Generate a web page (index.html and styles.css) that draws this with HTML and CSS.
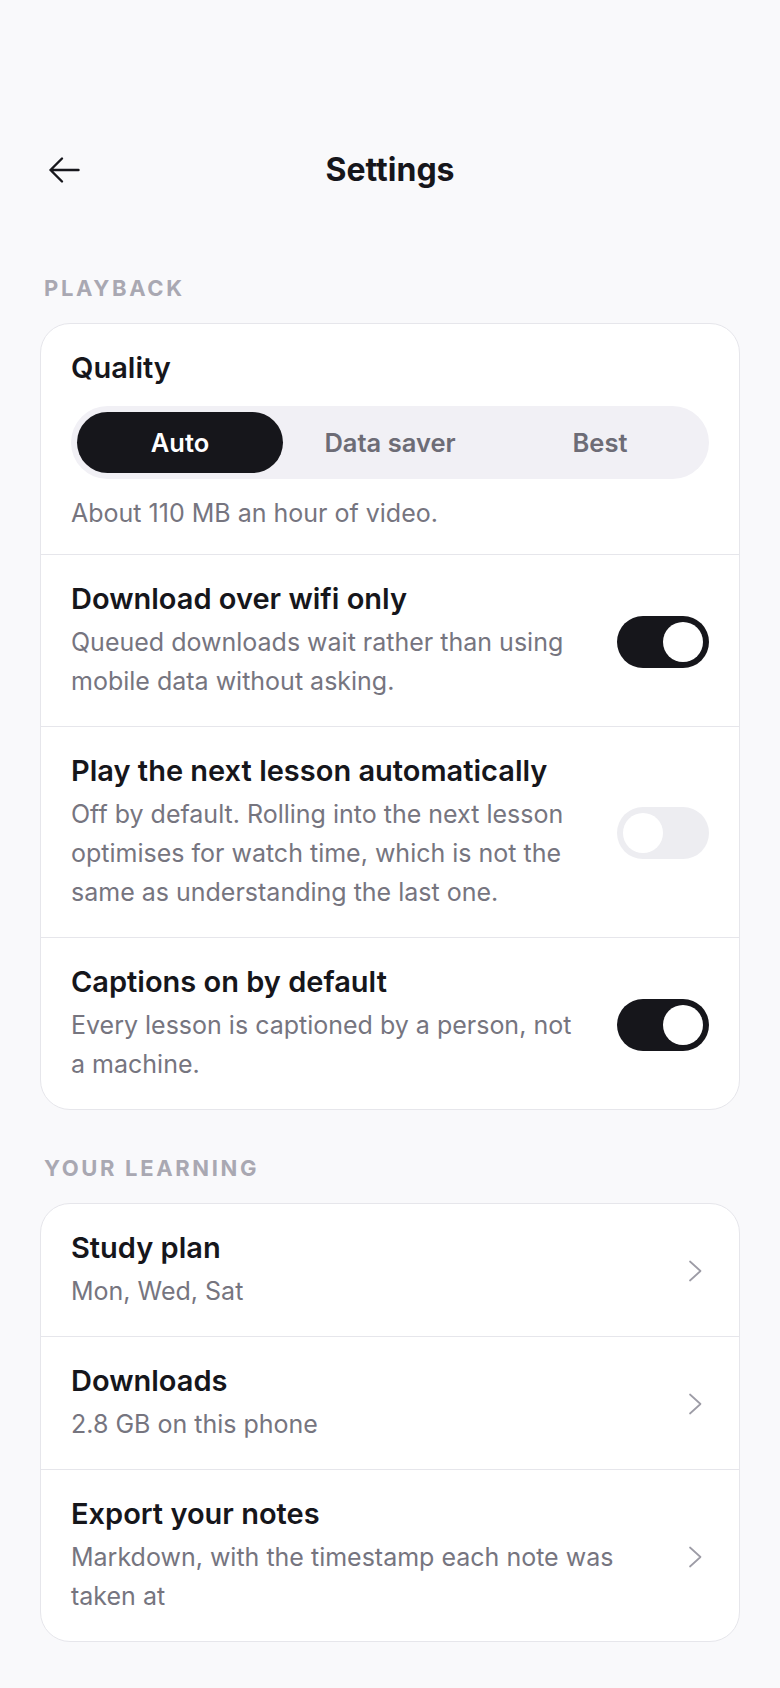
FILE: index.html
```html
<!DOCTYPE html>
<html lang="en">
<head>
<meta charset="utf-8">
<title>Settings</title>
<link rel="stylesheet" href="styles.css">
</head>
<body>
<div class="page">
  <header class="header">
    <button class="back" aria-label="Back">
      <svg width="32" height="28" viewBox="0 0 32 28" fill="none" stroke="#17171c" stroke-width="2.4" stroke-linecap="round" stroke-linejoin="round"><path d="M30.5 14H2.5M14 2.5L2.5 14L14 25.5"/></svg>
    </button>
    <h1 class="title">Settings</h1>
    <span class="spacer"></span>
  </header>

  <h2 class="section-label">PLAYBACK</h2>
  <section class="card">
    <div class="row row-quality">
      <div class="row-title">Quality</div>
      <div class="segmented">
        <span class="seg seg-active">Auto</span>
        <span class="seg">Data saver</span>
        <span class="seg">Best</span>
      </div>
      <div class="row-desc quality-desc">About 110 MB an hour of video.</div>
    </div>
    <div class="row row-toggle">
      <div class="row-text">
        <div class="row-title">Download over wifi only</div>
        <div class="row-desc">Queued downloads wait rather than using mobile data without asking.</div>
      </div>
      <span class="toggle on"><span class="knob"></span></span>
    </div>
    <div class="row row-toggle">
      <div class="row-text">
        <div class="row-title">Play the next lesson automatically</div>
        <div class="row-desc">Off by default. Rolling into the next lesson optimises for watch time, which is not the same as understanding the last one.</div>
      </div>
      <span class="toggle off"><span class="knob"></span></span>
    </div>
    <div class="row row-toggle">
      <div class="row-text">
        <div class="row-title">Captions on by default</div>
        <div class="row-desc">Every lesson is captioned by a person, not a machine.</div>
      </div>
      <span class="toggle on"><span class="knob"></span></span>
    </div>
  </section>

  <h2 class="section-label">YOUR LEARNING</h2>
  <section class="card">
    <div class="row row-nav">
      <div class="row-text">
        <div class="row-title">Study plan</div>
        <div class="row-desc">Mon, Wed, Sat</div>
      </div>
      <svg class="chev" width="14" height="22" viewBox="0 0 14 22" fill="none" stroke="#9d9ca6" stroke-width="1.7" stroke-linecap="round" stroke-linejoin="round"><path d="M2 1.5L12.5 11L2 20.5"/></svg>
    </div>
    <div class="row row-nav">
      <div class="row-text">
        <div class="row-title">Downloads</div>
        <div class="row-desc">2.8 GB on this phone</div>
      </div>
      <svg class="chev" width="14" height="22" viewBox="0 0 14 22" fill="none" stroke="#9d9ca6" stroke-width="1.7" stroke-linecap="round" stroke-linejoin="round"><path d="M2 1.5L12.5 11L2 20.5"/></svg>
    </div>
    <div class="row row-nav">
      <div class="row-text">
        <div class="row-title">Export your notes</div>
        <div class="row-desc">Markdown, with the timestamp each note was taken at</div>
      </div>
      <svg class="chev" width="14" height="22" viewBox="0 0 14 22" fill="none" stroke="#9d9ca6" stroke-width="1.7" stroke-linecap="round" stroke-linejoin="round"><path d="M2 1.5L12.5 11L2 20.5"/></svg>
    </div>
  </section>
</div>
</body>
</html>
```

FILE: styles.css
```css
* { box-sizing: border-box; }

html, body {
  margin: 0;
  padding: 0;
  background: #f9f9fb;
}

body {
  font-family: Inter, "Noto Sans", "Liberation Sans", sans-serif;
  color: #16161b;
  -webkit-font-smoothing: antialiased;
}

.page {
  padding: 140px 40px 40px 40px;
}

.header {
  height: 60px;
  display: flex;
  align-items: center;
  justify-content: space-between;
}

.back {
  width: 40px;
  height: 40px;
  padding: 0;
  margin-left: 8px;
  border: 0;
  background: none;
  display: flex;
  align-items: center;
}

.spacer {
  width: 48px;
}

.title {
  margin: 0;
  font-size: 32px;
  font-weight: 700;
  line-height: 40px;
}

.section-label {
  margin: 74px 0 21px 4px;
  font-size: 22px;
  line-height: 28px;
  font-weight: 700;
  letter-spacing: 0.12em;
  color: #a9a8b2;
}

.card + .section-label {
  margin-top: 44px;
}

.card {
  background: #ffffff;
  border: 1.5px solid #e6e6eb;
  border-radius: 30px;
  overflow: hidden;
}

.row {
  padding: 27px 30px 25px 30px;
}

.row + .row {
  border-top: 1.5px solid #e6e6eb;
}

.row-title {
  font-size: 29px;
  line-height: 34px;
  font-weight: 600;
  color: #16161b;
}

.row-desc {
  margin-top: 7px;
  font-size: 25px;
  line-height: 39px;
  font-weight: 400;
  color: #76757f;
}

.row-quality {
  padding-bottom: 21px;
}

.quality-desc {
  margin-top: 15px;
}

.segmented {
  margin-top: 21px;
  height: 73px;
  padding: 6px;
  border-radius: 37px;
  background: #f1f0f5;
  display: grid;
  grid-template-columns: 1fr 1fr 1fr;
  gap: 4px;
}

.seg {
  display: flex;
  align-items: center;
  justify-content: center;
  border-radius: 31px;
  font-size: 25.5px;
  font-weight: 600;
  color: #6d6c76;
}

.seg-active {
  background: #16161b;
  color: #ffffff;
}

.row-toggle,
.row-nav {
  display: flex;
  align-items: center;
}

.row-toggle {
  gap: 34px;
}

.row-nav {
  gap: 24px;
}

.row-text {
  flex: 1;
  min-width: 0;
}

.toggle {
  flex: none;
  width: 92px;
  height: 52px;
  border-radius: 26px;
  padding: 6px;
  display: flex;
}

.toggle.on {
  background: #16161b;
  justify-content: flex-end;
}

.toggle.off {
  background: #ededf1;
  justify-content: flex-start;
}

.knob {
  width: 40px;
  height: 40px;
  border-radius: 50%;
  background: #ffffff;
}

.chev {
  flex: none;
  margin-right: 7px;
}
```
